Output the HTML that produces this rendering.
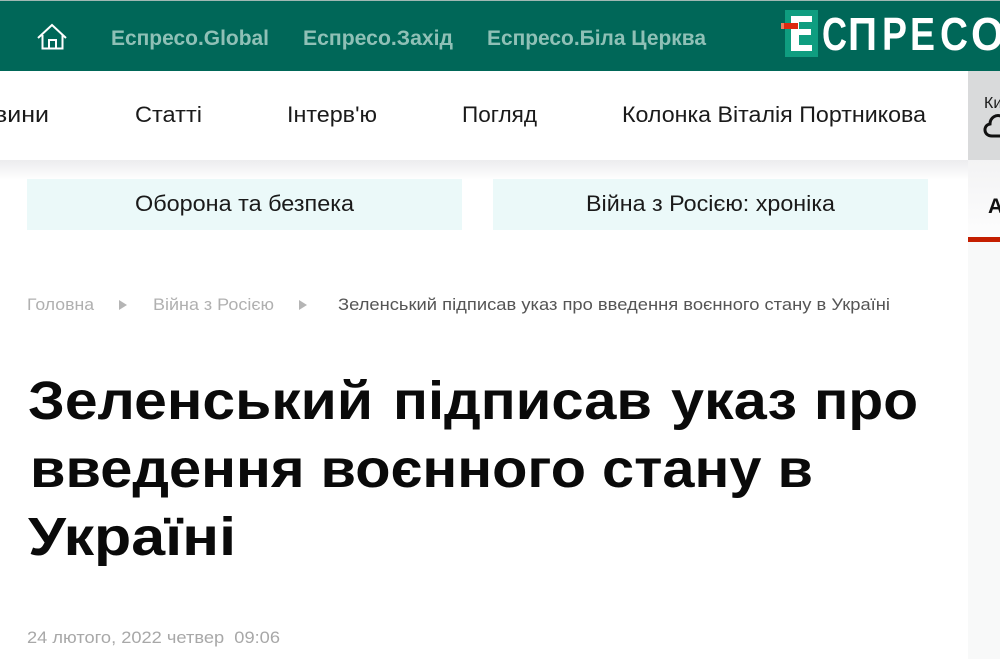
<!DOCTYPE html>
<html lang="uk"><head><meta charset="utf-8"><title>Еспресо</title>
<style>html,body{margin:0;padding:0;background:#fff}svg{display:block}text{font-family:"Liberation Sans",sans-serif}</style>
</head><body>
<svg width="1000" height="659" viewBox="0 0 1000 659" xmlns="http://www.w3.org/2000/svg">
<defs>
<linearGradient id="sh" x1="0" y1="0" x2="0" y2="1"><stop offset="0" stop-color="#ececee"/><stop offset="1" stop-color="#ffffff"/></linearGradient>
<linearGradient id="side" x1="0" y1="0" x2="0" y2="1"><stop offset="0" stop-color="#f3f3f4"/><stop offset="1" stop-color="#fdfdfd"/></linearGradient>
</defs>
<rect width="1000" height="659" fill="#fff"/>
<rect x="968" y="160" width="32" height="77" fill="url(#side)"/>
<rect x="968" y="242" width="32" height="417" fill="#f8f9f9"/>
<rect y="160" width="968" height="20" fill="url(#sh)"/>
<rect width="1000" height="71" fill="#006758"/>
<rect width="1000" height="1" fill="#9fb8b3"/>
<path d="M38 38 L52 25 L66 38 M42.5 35 V48.5 H62.5 V35 M49 48.5 V40 H56 V48.5" fill="none" stroke="#fff" stroke-width="2"/>
<g font-weight="700" font-size="21" fill="#8fc0b6">
<text x="111" y="45" textLength="158" lengthAdjust="spacingAndGlyphs">Еспресо.Global</text>
<text x="303" y="45" textLength="150" lengthAdjust="spacingAndGlyphs">Еспресо.Захід</text>
<text x="487" y="45" textLength="219" lengthAdjust="spacingAndGlyphs">Еспресо.Біла Церква</text>
</g>
<rect x="785" y="10" width="33" height="47" fill="#0f9d80"/>
<path d="M791 16 H812 V22 H799 V29 H811 V35 H799 V45 H812 V51 H791 Z" fill="#fff"/>
<rect x="784" y="23" width="14" height="6" fill="#dd2a10"/>
<rect x="781" y="23" width="3" height="6" fill="#f07a5c"/>
<g font-size="46" font-weight="700" fill="#fff">
<text x="822" y="50" textLength="25" lengthAdjust="spacingAndGlyphs">С</text>
<text x="848" y="50" textLength="29" lengthAdjust="spacingAndGlyphs">П</text>
<text x="882" y="50" textLength="25" lengthAdjust="spacingAndGlyphs">Р</text>
<text x="910" y="50" textLength="25" lengthAdjust="spacingAndGlyphs">Е</text>
<text x="940" y="50" textLength="28" lengthAdjust="spacingAndGlyphs">С</text>
<text x="971" y="50" textLength="33" lengthAdjust="spacingAndGlyphs">О</text>
</g>
<g font-size="22" fill="#1a1a1a">
<text x="-6" y="122" textLength="55" lengthAdjust="spacingAndGlyphs">вини</text>
<text x="135" y="122" textLength="67" lengthAdjust="spacingAndGlyphs">Статті</text>
<text x="287" y="122" textLength="90" lengthAdjust="spacingAndGlyphs">Інтерв'ю</text>
<text x="462" y="122" textLength="75" lengthAdjust="spacingAndGlyphs">Погляд</text>
<text x="622" y="122" textLength="304" lengthAdjust="spacingAndGlyphs">Колонка Віталія Портникова</text>
</g>
<rect x="968" y="71" width="32" height="89" fill="#d9dadb"/>
<text x="984" y="108" font-size="16" fill="#1a1a1a">Ки</text>
<path d="M1003 117 C996 113 990 118 990 124 C983 125 983 136 992 136 H1004" fill="none" stroke="#111" stroke-width="3"/>
<rect x="27" y="179" width="435" height="51" fill="#ebf9f9"/>
<rect x="493" y="179" width="435" height="51" fill="#ebf9f9"/>
<g font-size="22" fill="#1a1a1a">
<text x="135" y="211" textLength="219" lengthAdjust="spacingAndGlyphs">Оборона та безпека</text>
<text x="586" y="211" textLength="249" lengthAdjust="spacingAndGlyphs">Війна з Росією: хроніка</text>
</g>
<text x="988" y="213" font-size="21" font-weight="700" fill="#111">А</text>
<rect x="968" y="237" width="32" height="5" fill="#c41e00"/>
<g font-size="17">
<text x="27" y="310" textLength="67" lengthAdjust="spacingAndGlyphs" fill="#b0b0b0">Головна</text>
<text x="153" y="310" textLength="121" lengthAdjust="spacingAndGlyphs" fill="#b0b0b0">Війна з Росією</text>
<text x="338" y="310" textLength="552" lengthAdjust="spacingAndGlyphs" fill="#555">Зеленський підписав указ про введення воєнного стану в Україні</text>
</g>
<path d="M119 300 L127 305 L119 310 Z M299 300 L307 305 L299 310 Z" fill="#b5b5b5"/>
<g font-size="54" font-weight="700" fill="#0a0a0a">
<text x="28" y="419" textLength="345" lengthAdjust="spacingAndGlyphs">Зеленський</text>
<text x="393" y="419" textLength="259" lengthAdjust="spacingAndGlyphs">підписав</text>
<text x="671" y="419" textLength="126" lengthAdjust="spacingAndGlyphs">указ</text>
<text x="814" y="419" textLength="104" lengthAdjust="spacingAndGlyphs">про</text>
<text x="30" y="487" textLength="783" lengthAdjust="spacingAndGlyphs">введення воєнного стану в</text>
<text x="28" y="555" textLength="208" lengthAdjust="spacingAndGlyphs">Україні</text>
</g>
<text x="27" y="643" font-size="17" fill="#a8a8a8" textLength="253" lengthAdjust="spacingAndGlyphs">24 лютого, 2022 четвер&#160;&#160;09:06</text>
</svg>
</body></html>
